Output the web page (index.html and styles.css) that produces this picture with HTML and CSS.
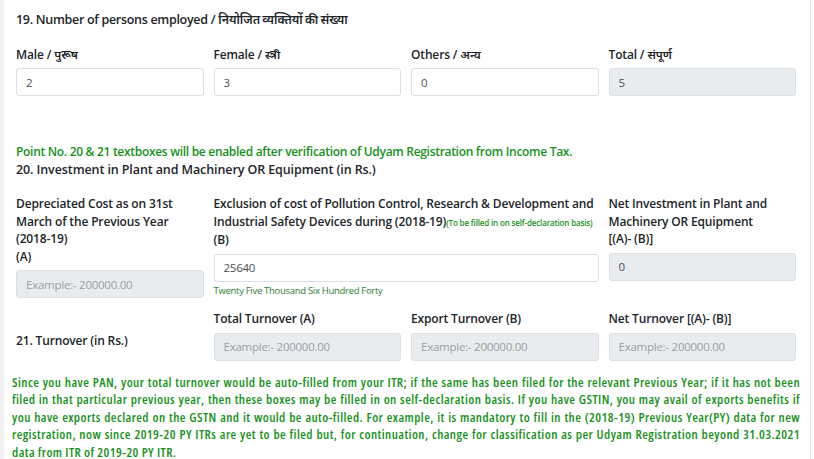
FILE: index.html
```html
<!DOCTYPE html>
<html lang="en">
<head>
  <meta charset="UTF-8">
  <meta name="viewport" content="width=device-width, initial-scale=1.0">
  <title>Udyam Registration - Employment, Investment and Turnover</title>
  <link rel="stylesheet" href="styles.css">
</head>
<body>
  <div class="panel">

    <!-- 19. Persons employed -->
    <h4 class="section-title">19. Number of persons employed / <span class="hi">नियोजित व्यक्तियों की संख्या</span></h4>
    <div class="row">
      <div class="col">
        <label>Male / <span class="hi">पुरूष</span></label>
        <input type="text" class="form-control" value="2">
      </div>
      <div class="col">
        <label>Female / <span class="hi">स्त्री</span></label>
        <input type="text" class="form-control" value="3">
      </div>
      <div class="col">
        <label>Others / <span class="hi">अन्य</span></label>
        <input type="text" class="form-control" value="0">
      </div>
      <div class="col">
        <label>Total / <span class="hi">संपूर्ण</span></label>
        <input type="text" class="form-control" value="5" disabled>
      </div>
    </div>

    <!-- 20. Investment -->
    <p class="note">Point No. 20 &amp; 21 textboxes will be enabled after verification of Udyam Registration from Income Tax.</p>
    <h4 class="section-title sub">20. Investment in Plant and Machinery OR Equipment (in Rs.)</h4>
    <div class="row investment">
      <div class="col">
        <label>Depreciated Cost as on 31st March of the Previous Year (2018-19)<br>(A)</label>
        <input type="text" class="form-control" placeholder="Example:- 200000.00" disabled>
      </div>
      <div class="col wide">
        <label>Exclusion of cost of Pollution Control, Research &amp; Development and Industrial Safety Devices during (2018-19)<small class="hint">(To be filled in on self-declaration basis)</small><br>(B)</label>
        <input type="text" class="form-control" value="25640">
        <span class="in-words">Twenty Five Thousand Six Hundred Forty</span>
      </div>
      <div class="col">
        <label>Net Investment in Plant and Machinery OR Equipment<br>[(A)- (B)]</label>
        <input type="text" class="form-control" value="0" disabled>
      </div>
    </div>

    <!-- 21. Turnover -->
    <div class="row turnover">
      <div class="col">
        <span class="row-title">21. Turnover (in Rs.)</span>
      </div>
      <div class="col">
        <label>Total Turnover (A)</label>
        <input type="text" class="form-control" placeholder="Example:- 200000.00" disabled>
      </div>
      <div class="col">
        <label>Export Turnover (B)</label>
        <input type="text" class="form-control" placeholder="Example:- 200000.00" disabled>
      </div>
      <div class="col">
        <label>Net Turnover [(A)- (B)]</label>
        <input type="text" class="form-control" placeholder="Example:- 200000.00" disabled>
      </div>
    </div>

    <p class="info">Since you have PAN, your total turnover would be auto-filled from your ITR; if the same has been filed for the relevant Previous Year; if it has not been filed in that particular previous year, then these boxes may be filled in on self-declaration basis. If you have GSTIN, you may avail of exports benefits if you have exports declared on the GSTN and it would be auto-filled. For example, it is mandatory to fill in the (2018-19) Previous Year(PY) data for new registration, now since 2019-20 PY ITRs are yet to be filed but, for continuation, change for classification as per Udyam Registration beyond 31.03.2021 data from ITR of 2019-20 PY ITR.</p>

  </div>
</body>
</html>
```

FILE: styles.css
```css
/* General Styles */
* {
  margin: 0;
  padding: 0;
  box-sizing: border-box;
}

body {
  font-family: 'Open Sans', 'Noto Sans', sans-serif;
  font-size: 12px;
  letter-spacing: -0.15px;
  line-height: 17.5px;
  color: #212529;
  background-color: #fff;
}

.panel {
  width: 811px;
  min-height: 459px;
  padding: 11px 14px 0 12px;
  border-left: 4px solid #f1f1f1;
  border-right: 1px solid #e6e6e6;
}

/* Hindi text runs a little narrower */
.hi {
  font-size: 0.98em;
  font-stretch: 87.5%;
  letter-spacing: 0;
}

.section-title {
  font-size: 12.5px;
  letter-spacing: -0.3px;
  font-weight: 600;
}

.section-title.sub {
  letter-spacing: -0.1px;
  margin-bottom: 16px;
}

.row {
  display: flex;
  gap: 10px;
  align-items: flex-start;
}

.col {
  flex: 0 0 187.5px;
  display: flex;
  flex-direction: column;
}

.col.wide {
  flex-basis: 385px;
}

label,
.row-title {
  font-weight: 600;
  margin-bottom: 5px;
}

.section-title + .row {
  margin-top: 17px;
}

.form-control {
  height: 28px;
  width: 100%;
  padding: 0 9px;
  font-family: inherit;
  font-size: 11.5px;
  letter-spacing: -0.25px;
  color: #495057;
  background-color: #fff;
  border: 1px solid #dcdfe3;
  border-radius: 3px;
}

.form-control:disabled {
  background-color: #e9ecef;
  color: #495057;
}

.form-control::placeholder {
  color: #9aa0a6;
}

.hint {
  font-size: 8px;
  letter-spacing: -0.15px;
  color: #17911b;
}

.in-words {
  font-size: 9.5px;
  letter-spacing: -0.3px;
  line-height: 14px;
  margin-top: 2px;
  color: #2e7d32;
}

.note {
  margin-top: 47px;
  letter-spacing: -0.3px;
  font-weight: 600;
  color: #17911b;
}

.turnover {
  margin-top: 12px;
}

.row-title {
  padding-top: 22px;
}

.info {
  margin: 13px 0 0 -4px;
  width: 788px;
  font-size: 13px;
  font-stretch: 87.5%;
  letter-spacing: 0.42px;
  font-weight: 600;
  color: #17911b;
  text-align: justify;
}
```
